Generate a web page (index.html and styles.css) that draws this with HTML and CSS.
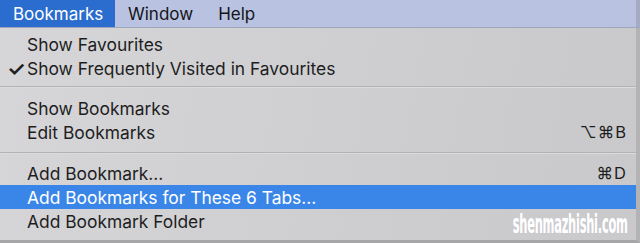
FILE: index.html
```html
<!DOCTYPE html>
<html>
<head>
<meta charset="utf-8">
<link rel="stylesheet" href="styles.css">
</head>
<body>
<div class="screen">
  <div class="menubar">
    <span class="mb-item active">Bookmarks</span>
    <span class="mb-item">Window</span>
    <span class="mb-item">Help</span>
  </div>
  <div class="menu">
    <div class="group first">
      <div class="row"><span class="check"></span><span class="label">Show Favourites</span></div>
      <div class="row"><span class="check">✓</span><span class="label">Show Frequently Visited in Favourites</span></div>
    </div>
    <div class="sep"></div>
    <div class="group">
      <div class="row"><span class="check"></span><span class="label">Show Bookmarks</span></div>
      <div class="row"><span class="check"></span><span class="label">Edit Bookmarks</span><span class="key">⌥⌘B</span></div>
    </div>
    <div class="sep"></div>
    <div class="group last">
      <div class="row"><span class="check"></span><span class="label">Add Bookmark…</span><span class="key">⌘D</span></div>
      <div class="row selected"><span class="check"></span><span class="label">Add Bookmarks for These 6 Tabs…</span></div>
      <div class="row"><span class="check"></span><span class="label">Add Bookmark Folder</span></div>
    </div>
    <span class="watermark">shenmazhishi.com</span>
  </div>
</div>
</body>
</html>
```

FILE: styles.css
```css
html, body {
  margin: 0;
  padding: 0;
  background: #a9a9ac;
}
.screen {
  width: 640px;
  height: 243px;
  overflow: hidden;
  font-family: Inter, "Liberation Sans", sans-serif;
  color: #1e1e1f;
}
.menubar {
  display: flex;
  height: 27px;
  width: 636px;
  background: #b9c3e1;
  border-bottom: 1px solid #9ea6bd;
  border-right: 4px solid #a4abc3;
}
.mb-item {
  display: flex;
  align-items: center;
  padding: 0 12px 0 13px;
  font-size: 17px;
  color: #141418;
}
.mb-item.active {
  background: #2a6dcf;
  color: #ffffff;
  width: 90px;
}
.menu {
  position: relative;
  width: 636px;
  height: 212px;
  background: linear-gradient(100deg, #d6d6d8 0%, #cfcfd1 50%, #c9c9cc 100%);
  border-right: 4px solid #b3b3b6;
  border-bottom: 3px solid #a6a6a9;
}
.group {
  display: flex;
  flex-direction: column;
  padding: 8px 0 8px;
}
.group.first {
  padding: 4px 0 6px;
}
.group.last {
  padding: 7px 0 7px;
}
.row {
  display: flex;
  align-items: center;
  height: 24px;
  font-size: 17.4px;
  padding-right: 9px;
}
.check {
  width: 27px;
  box-sizing: border-box;
  padding-left: 7px;
  font-size: 21px;
  line-height: 1;
  font-weight: 600;
}
.label {
  flex: 1;
}
.key {
  font-size: 16.5px;
  letter-spacing: 1px;
}
.row.selected {
  background: #3a86e8;
  color: #ffffff;
}
.sep {
  height: 1px;
  background: #b2b2b5;
  border-bottom: 1px solid #dcdcde;
}
.watermark {
  position: absolute;
  right: 8px;
  bottom: 3px;
  font-family: "DejaVu Sans Condensed", "DejaVu Sans", sans-serif;
  font-stretch: condensed;
  font-weight: bold;
  font-size: 27px;
  line-height: 27px;
  color: #ffffff;
  letter-spacing: -0.5px;
  transform: scaleX(0.47);
  transform-origin: right center;
  white-space: nowrap;
}
```
